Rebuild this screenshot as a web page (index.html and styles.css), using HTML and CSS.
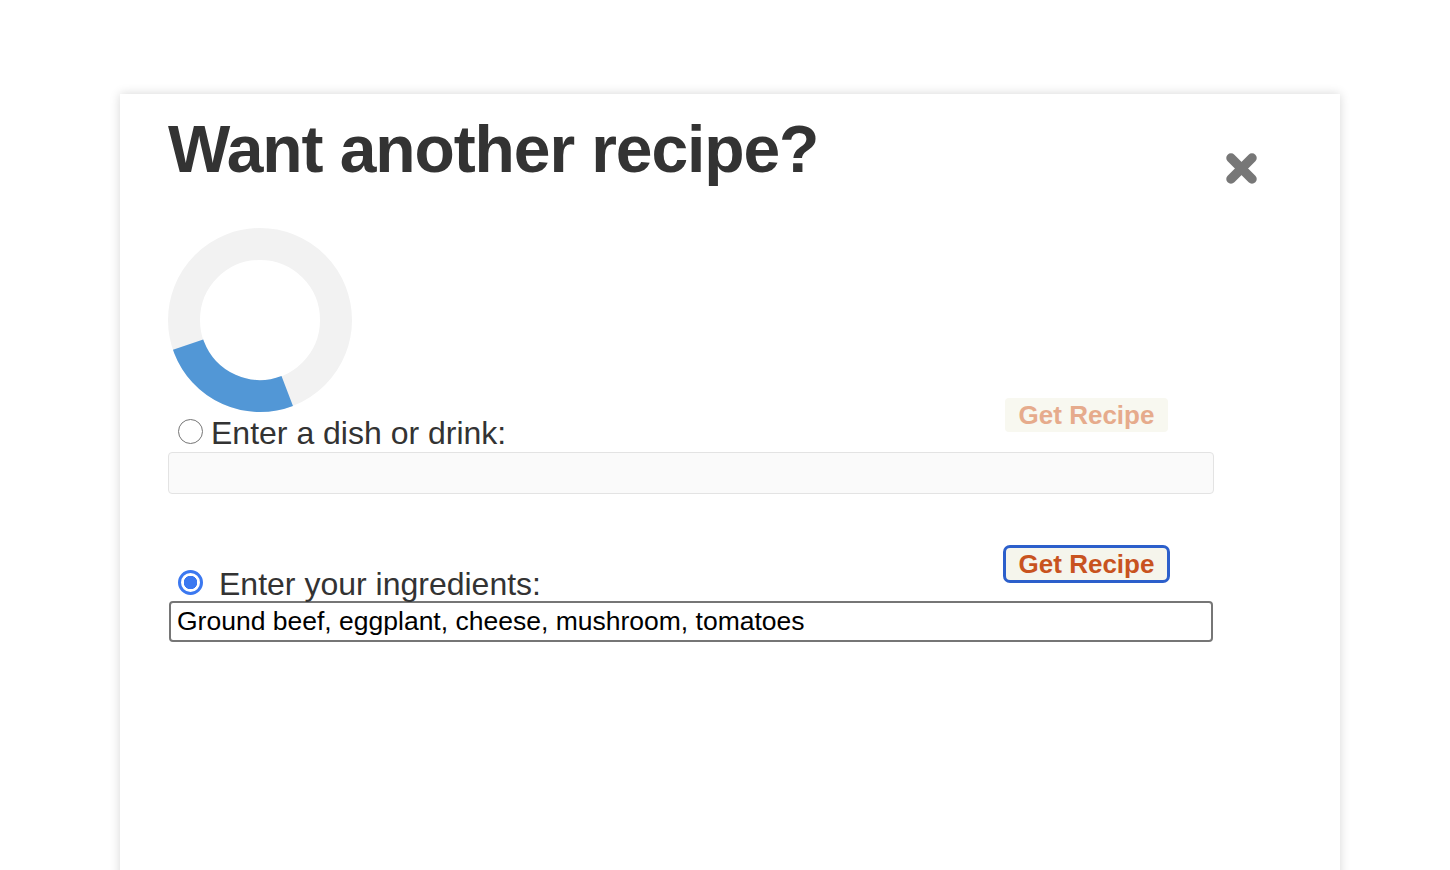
FILE: index.html
```html
<!DOCTYPE html>
<html lang="en">
<head>
<meta charset="utf-8">
<title>Want another recipe?</title>
<link rel="stylesheet" href="styles.css">
</head>
<body>
<div class="card">
  <div class="header">
    <h1 class="title">Want another recipe?</h1>
    <button class="close" aria-label="Close">
      <svg width="33" height="33" viewBox="0 0 33 33"><path d="M6 6 L27 27 M27 6 L6 27" stroke="#777" stroke-width="9.5" stroke-linecap="round"/></svg>
    </button>
  </div>
  <div class="chart">
    <svg width="184" height="184" viewBox="0 0 184 184">
      <circle cx="92" cy="92" r="76" fill="none" stroke="#f2f2f2" stroke-width="32"/>
      <circle cx="92" cy="92" r="76" fill="none" stroke="#5297d6" stroke-width="32" stroke-dasharray="122 478" transform="rotate(69 92 92)"/>
    </svg>
  </div>
  <form class="form">
    <div class="section">
      <div class="label-row">
        <label class="choice"><input type="radio" name="mode" class="radio"><span class="label-text">Enter a dish or drink:</span></label>
        <button type="button" class="get-btn disabled">Get Recipe</button>
      </div>
      <input type="text" class="field field-disabled" disabled>
    </div>
    <div class="section second">
      <div class="label-row">
        <label class="choice"><input type="radio" name="mode" class="radio" checked><span class="label-text wide">Enter your ingredients:</span></label>
        <button type="button" class="get-btn focused">Get Recipe</button>
      </div>
      <input type="text" class="field field-active" value="Ground beef, eggplant, cheese, mushroom, tomatoes">
    </div>
  </form>
</div>
</body>
</html>
```

FILE: styles.css
```css
html, body {
  margin: 0;
  padding: 0;
  background: #ffffff;
}

body {
  font-family: "Liberation Sans", Arial, Helvetica, sans-serif;
  color: #333333;
  overflow: hidden;
  height: 870px;
}

.card {
  margin: 94px 120px 0 120px;
  width: 1220px;
  height: 900px;
  box-sizing: border-box;
  padding: 23px 82px 0 48px;
  background: #ffffff;
  box-shadow: 0 0 10px rgba(0, 0, 0, 0.16);
}

.header {
  display: flex;
  justify-content: space-between;
  align-items: flex-start;
  height: 64px;
}

.title {
  margin: 0;
  font-size: 66px;
  line-height: 64px;
  font-weight: 700;
  color: #333333;
  letter-spacing: -1.1px;
}

.close {
  margin-top: 35px;
  padding: 0;
  border: 0;
  background: none;
  width: 33px;
  height: 33px;
  display: block;
}

.close svg {
  display: block;
}

.chart {
  margin-top: 47px;
  width: 184px;
  height: 184px;
}

.chart svg {
  display: block;
}

.form {
  width: 1046px;
  margin-top: 1px;
}

.section.second {
  margin-top: 70px;
}

.label-row {
  display: flex;
  justify-content: space-between;
  align-items: flex-start;
  height: 37px;
}

.choice {
  display: flex;
  align-items: center;
  height: 37px;
}

.radio {
  appearance: none;
  -webkit-appearance: none;
  margin: 0 0 0 10px;
  width: 25px;
  height: 25px;
  border: 1.5px solid #767676;
  border-radius: 50%;
  box-sizing: border-box;
  background: #fff;
}

.radio:checked {
  border: 3px solid #3b78f0;
  background: radial-gradient(circle, #3b78f0 0 6.5px, #fff 7px);
}

.label-text {
  margin-left: 8px;
  padding-top: 3px;
  font-size: 32px;
  line-height: 37px;
  color: #333333;
}

.label-text.wide {
  margin-left: 16px;
}

.get-btn {
  margin: -15px 46px 0 0;
  width: 163px;
  height: 34px;
  padding: 0;
  border: 0;
  border-radius: 4px;
  font-family: "Liberation Sans", Arial, Helvetica, sans-serif;
  font-size: 26px;
  font-weight: 700;
  line-height: 34px;
  text-align: center;
}

.get-btn.disabled {
  background: #f8f8f0;
  color: #e6ab8c;
}

.get-btn.focused {
  margin-top: -17px;
  background: #f5f5ec;
  color: #c8531f;
  outline: 3px solid #2c5fcb;
  outline-offset: -1px;
  border-radius: 5px;
}

.field {
  display: block;
  box-sizing: border-box;
  width: 1046px;
  height: 42px;
  margin-top: 2px;
  border-radius: 4px;
  font-family: "Liberation Sans", Arial, Helvetica, sans-serif;
  font-size: 26.5px;
  color: #000;
  padding: 0 7px;
}

.field-disabled {
  background: #fafafa;
  border: 1.5px solid #e3e3e3;
}

.field-active {
  margin-top: 0;
  margin-left: 1px;
  width: 1044px;
  height: 41px;
  background: #ffffff;
  border: 2px solid #767676;
  padding: 0 6px;
}
```
